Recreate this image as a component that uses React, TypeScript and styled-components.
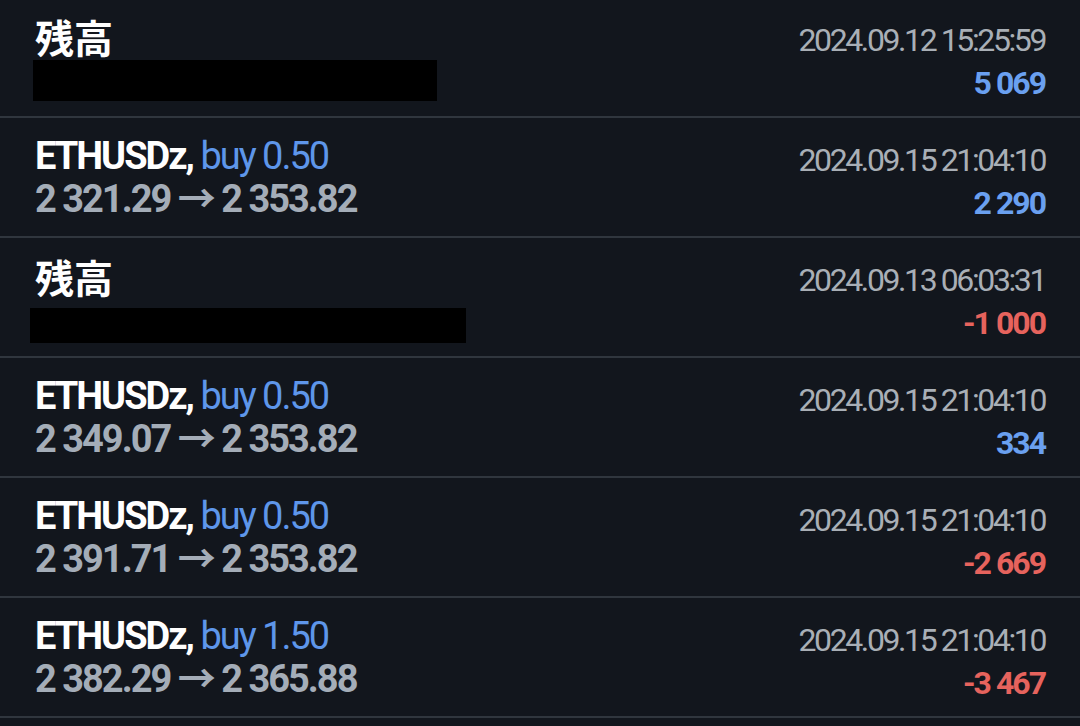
import styled, { createGlobalStyle } from 'styled-components';

const GlobalStyle = createGlobalStyle`
  body {
    margin: 0;
    background: #12161d;
    font-family: Roboto, "Noto Sans CJK JP", sans-serif;
  }
`;

const List = styled.div`
  margin-top: -2px;
  background: #12161d;
`;

const Row = styled.div`
  box-sizing: border-box;
  height: 120px;
  padding: 17px 35px 0;
  border-bottom: 2px solid #30363e;
  display: flex;
  justify-content: space-between;
  align-items: flex-start;
`;

const LeftCol = styled.div`
  display: flex;
  flex-direction: column;
`;

const RightCol = styled.div`
  display: flex;
  flex-direction: column;
  align-items: flex-end;
  padding-top: 4px;
`;

const Title = styled.div`
  font-size: 38px;
  line-height: 43px;
  font-weight: 700;
  color: #ffffff;
  letter-spacing: -2px;
  white-space: nowrap;
`;

const Side = styled.span`
  font-weight: 400;
  color: #5e96ea;
`;

const Prices = styled.div`
  font-size: 38px;
  line-height: 43px;
  font-weight: 700;
  color: #a4adb8;
  letter-spacing: -2px;
  white-space: nowrap;
`;

const BalanceTitle = styled.div`
  font-family: "Noto Sans CJK JP", sans-serif;
  font-size: 39px;
  line-height: 43px;
  font-weight: 700;
  color: #ffffff;
`;

const Redacted = styled.div<{ $width: number; $height: number; $top: number; $shift: number }>`
  width: ${({ $width }) => $width}px;
  height: ${({ $height }) => $height}px;
  margin-top: ${({ $top }) => $top}px;
  margin-left: ${({ $shift }) => $shift}px;
  background: #000000;
`;

const DateText = styled.div`
  font-size: 32px;
  line-height: 43px;
  color: #a9afb6;
  letter-spacing: -2.4px;
  white-space: nowrap;
`;

const Amount = styled.div<{ $negative: boolean }>`
  font-size: 32px;
  line-height: 43px;
  font-weight: 700;
  letter-spacing: -2px;
  color: ${({ $negative }) => ($negative ? '#e6635d' : '#6aa0f0')};
`;

type Entry =
  | { kind: 'balance', date: string, amount: string, box: { width: number, height: number, top: number, shift: number } }
  | { kind: 'deal', side: string, open: string, close: string, date: string, amount: string };

const entries: Entry[] = [
  { kind: 'balance', date: '2024.09.12 15:25:59', amount: '5 069', box: { width: 404, height: 41, top: 2, shift: -2 } },
  { kind: 'deal', side: 'buy 0.50', open: '2 321.29', close: '2 353.82', date: '2024.09.15 21:04:10', amount: '2 290' },
  { kind: 'balance', date: '2024.09.13 06:03:31', amount: '-1 000', box: { width: 436, height: 35, top: 10, shift: -5 } },
  { kind: 'deal', side: 'buy 0.50', open: '2 349.07', close: '2 353.82', date: '2024.09.15 21:04:10', amount: '334' },
  { kind: 'deal', side: 'buy 0.50', open: '2 391.71', close: '2 353.82', date: '2024.09.15 21:04:10', amount: '-2 669' },
  { kind: 'deal', side: 'buy 1.50', open: '2 382.29', close: '2 365.88', date: '2024.09.15 21:04:10', amount: '-3 467' },
];

const App = () => (
  <>
    <GlobalStyle />
    <List>
      {entries.map((e, i) => (
        <Row key={i}>
          {e.kind === 'balance' ? (
            <LeftCol>
              <BalanceTitle>残高</BalanceTitle>
              <Redacted $width={e.box.width} $height={e.box.height} $top={e.box.top} $shift={e.box.shift} />
            </LeftCol>
          ) : (
            <LeftCol>
              <Title>
                ETHUSDz, <Side>{e.side}</Side>
              </Title>
              <Prices>{`${e.open} → ${e.close}`}</Prices>
            </LeftCol>
          )}
          <RightCol>
            <DateText>{e.date}</DateText>
            <Amount $negative={e.amount.startsWith('-')}>{e.amount}</Amount>
          </RightCol>
        </Row>
      ))}
    </List>
  </>
);

export default App;
